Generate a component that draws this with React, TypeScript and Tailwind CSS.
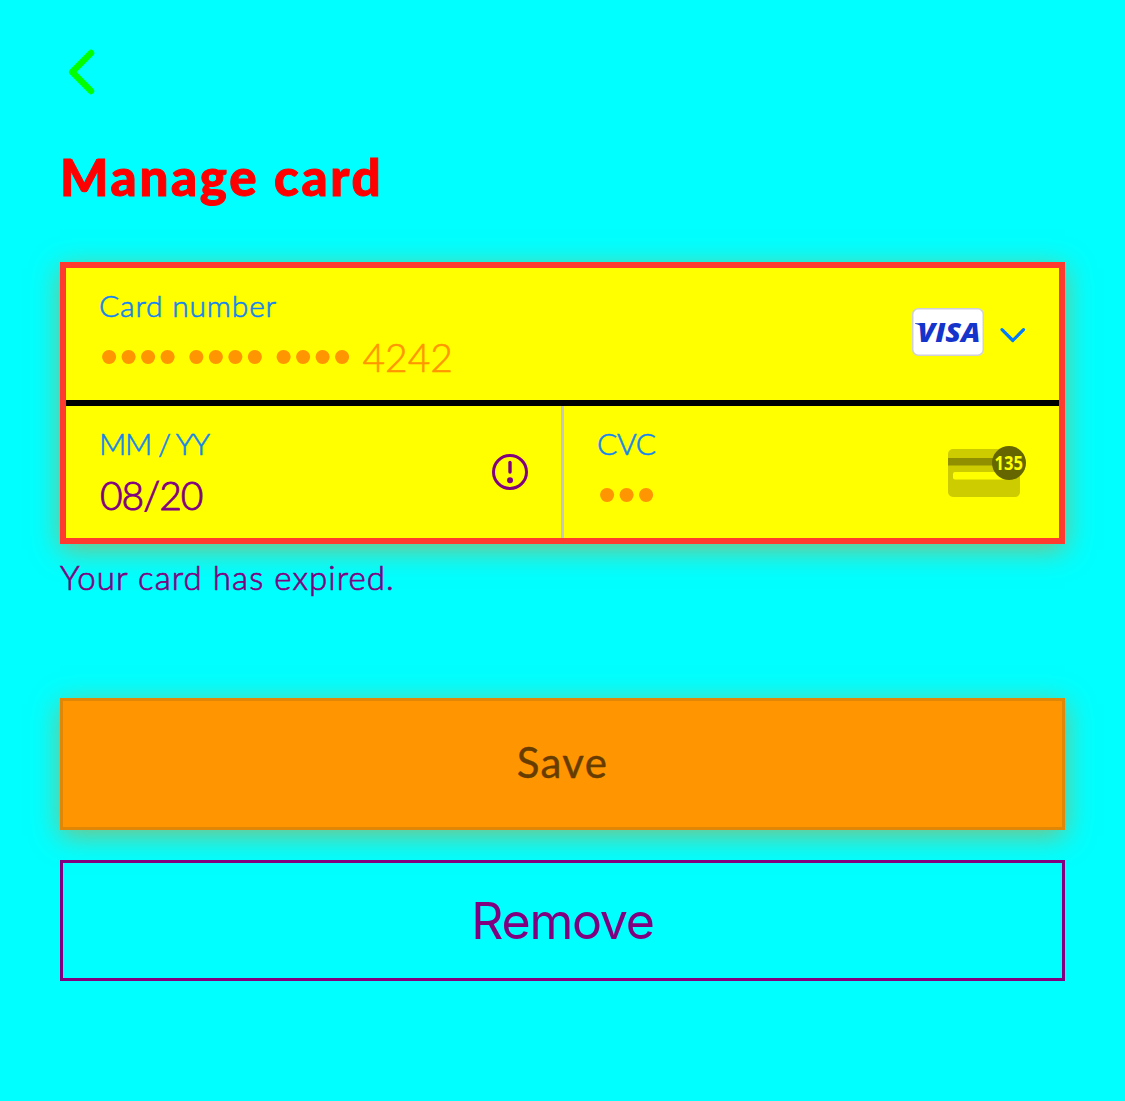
import React from "react";

function Dots({ count }: { count: number }) {
  return (
    <span className="font-['Liberation_Sans'] text-[52px] leading-[38px] tracking-[1.3px] text-[#ff9500]">
      {"•".repeat(count)}
    </span>
  );
}

function Label({ className, children }: { className: string; children: React.ReactNode }) {
  return (
    <div className={`h-9 text-[30px] leading-9 font-light whitespace-nowrap text-[#007aff]/90 [-webkit-text-stroke:0.6px] ${className}`}>
      {children}
    </div>
  );
}

function VisaBadge() {
  return (
    <svg width="72" height="48" viewBox="0 0 72 48" aria-label="Visa">
      <rect x="0.75" y="0.75" width="70.5" height="46.5" rx="5.5" fill="#fff" stroke="#d0d0d8" strokeWidth="1.5" />
      <path d="M3 15.2H11L12.5 21.5Q8.5 17 3 15.8Z" fill="#1434cb" />
      <text x="5.5" y="34.4" fontFamily="Open Sans" fontSize="27" fontWeight="800" fontStyle="italic" fill="#1434cb" textLength="63" lengthAdjust="spacingAndGlyphs">
        VISA
      </text>
    </svg>
  );
}

function CvcIcon() {
  return (
    <svg className="overflow-visible" width="78" height="52" viewBox="0 0 78 52" aria-label="Security code">
      <rect x="0" y="3" width="72" height="48" rx="5" fill="#cccc00" />
      <rect x="0" y="12" width="50" height="7.5" fill="#8f8f00" />
      <rect x="5" y="26" width="62" height="7.5" rx="2" fill="#ffff00" />
      <circle cx="61" cy="17" r="17" fill="#666600" />
      <text x="46.5" y="24.3" fontFamily="Noto Sans" fontSize="20" fontWeight="700" fill="#ffff00" textLength="28.5" lengthAdjust="spacingAndGlyphs">
        135
      </text>
    </svg>
  );
}

export default function App() {
  return (
    <main className="flex h-[1101px] w-[1125px] flex-col bg-[#00ffff] px-[60px] pt-[49px] font-['Lato',sans-serif]">
      <button aria-label="Back" className="ml-2 h-[46px] w-7">
        <svg width="28" height="46" viewBox="0 0 28 46" fill="none" stroke="#00ff00" strokeWidth="6.4" strokeLinecap="round" strokeLinejoin="round">
          <path d="M23 4L4.2 23L23 42" />
        </svg>
      </button>

      <h1 className="mt-[52px] h-[60px] text-[51px] leading-[60px] font-black tracking-[2.7px] whitespace-nowrap text-[#ff0000] [-webkit-text-stroke:1px]">
        Manage card
      </h1>

      <section className="mt-[55px] h-[282px] shrink-0 border-[6px] border-[#ff3b30] bg-[#ffff00] shadow-[0_6px_26px_rgba(255,128,0,0.5)]">
        <div className="flex h-[138px] items-start justify-between border-b-[6px] border-black pr-[33px] pl-[33px]">
          <div className="pt-[19px]">
            <Label className="tracking-[0.8px]">Card number</Label>
            <div className="mt-[14px] flex h-10 items-start">
              <div className="ml-px flex gap-[9.2px]">
                <Dots count={4} />
                <Dots count={4} />
                <Dots count={4} />
              </div>
              <span className="ml-[10px] text-[39px] leading-10 font-light text-[#ff9500] [-webkit-text-stroke:0.6px]">4242</span>
            </div>
          </div>
          <div className="flex items-start gap-4 pt-10">
            <VisaBadge />
            <svg className="mt-[19px]" width="26" height="18" viewBox="0 0 26 18" fill="none" stroke="#007aff" strokeWidth="3.2" strokeLinecap="round" strokeLinejoin="round">
              <path d="M2 2.6L12.8 13.5L23.5 2.6" />
            </svg>
          </div>
        </div>
        <div className="flex h-[132px]">
          <div className="flex w-[498px] items-start justify-between border-r-[3px] border-[#c6c6c8] pr-[33px] pl-[33px]">
            <div className="pt-[19px]">
              <Label className="tracking-[-1.2px]">MM / YY</Label>
              <div className="mt-[14px] ml-px text-[39px] leading-10 font-light tracking-[-1px] text-[#800080] [-webkit-text-stroke:0.9px]">08/20</div>
            </div>
            <svg className="mt-12" width="36" height="36" viewBox="0 0 36 36">
              <circle cx="18" cy="18" r="16.5" fill="none" stroke="#800080" strokeWidth="3" />
              <path d="M18 8.5V18" stroke="#800080" strokeWidth="3.4" strokeLinecap="round" />
              <circle cx="18" cy="26.3" r="3" fill="#800080" />
            </svg>
          </div>
          <div className="flex flex-1 items-start justify-between pr-[33px] pl-[33px]">
            <div className="pt-[19px]">
              <Label className="tracking-[-0.3px]">CVC</Label>
              <div className="mt-[14px] ml-px flex h-10 items-start">
                <Dots count={3} />
              </div>
            </div>
            <div className="pt-10">
              <CvcIcon />
            </div>
          </div>
        </div>
      </section>

      <p className="mt-[13px] h-[41px] text-[33px] leading-10 font-light tracking-[1.08px] whitespace-nowrap text-[#800080] [-webkit-text-stroke:0.7px]">
        Your card has expired.
      </p>

      <button className="mt-[100px] h-[132px] shrink-0 border-[3px] border-[#e08708] bg-[#ff9500] pb-[3px] text-[42px] font-normal tracking-[1.3px] text-[#663c00] shadow-[0_6px_26px_rgba(255,128,0,0.5)] [-webkit-text-stroke:0.4px]">
        Save
      </button>
      <button className="mt-[30px] h-[121px] shrink-0 border-[3px] border-[#800080] pt-[2px] font-['Inter'] text-[50px] tracking-[-1.2px] text-[#800080]">
        Remove
      </button>
    </main>
  );
}
